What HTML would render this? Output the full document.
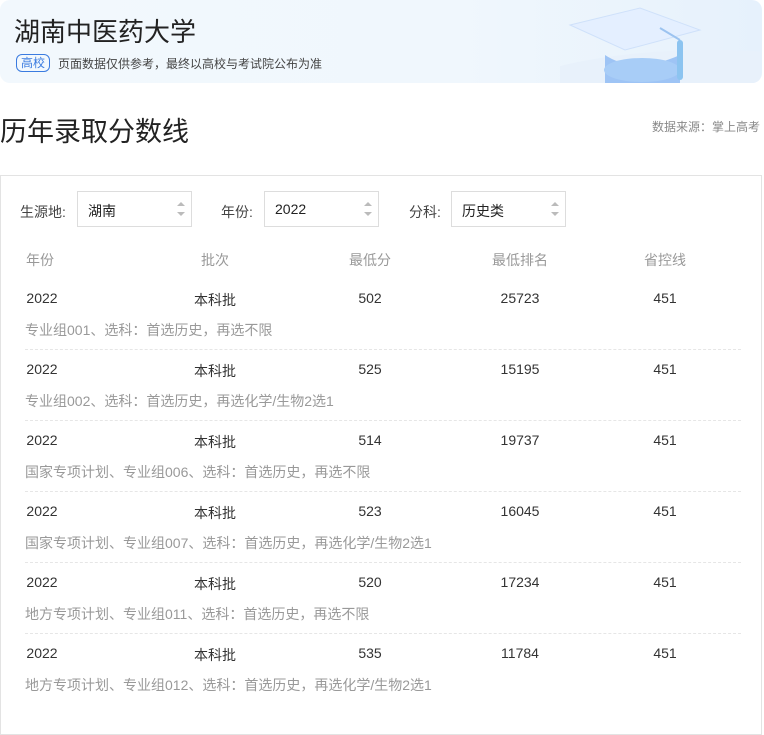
<!DOCTYPE html><html><head><meta charset="utf-8"><style>
*{margin:0;padding:0;box-sizing:border-box}
body{width:764px;height:713px;overflow:hidden;background:#fff;font-family:"Liberation Sans","Noto Sans CJK SC",sans-serif;position:relative;color:#333}
.hd{position:absolute;left:0;top:0;width:762px;height:83px;border-radius:10px;background:linear-gradient(90deg,#f2f8fd,#f0f7fd 60%,#e6f1fc);overflow:hidden}
.hd h1{position:absolute;left:14px;top:12px;font-size:26px;font-weight:normal;color:#222}
.tag{position:absolute;left:16px;top:54px;border:1px solid #3a7be0;color:#3a7be0;border-radius:6px;font-size:12px;padding:0 4px;line-height:16px}
.note{position:absolute;left:58px;top:55px;font-size:12px;color:#444}
.t2{position:absolute;left:0;top:110px;font-size:27px;color:#222}
.src{position:absolute;right:4px;top:118px;font-size:12px;color:#888}
.card{position:absolute;left:0;top:175px;width:762px;height:560px;border:1px solid #e3e3e3}
.lab{position:absolute;font-size:14px;color:#444;top:202px}
.sel{position:absolute;top:191px;height:36px;border:1px solid #ddd;font-size:14px;padding:9px 10px;color:#222}
.sel:after{content:"";position:absolute;right:6px;top:10px;border:4px solid transparent;border-bottom-color:#bbb;border-top:none}
.sel:before{content:"";position:absolute;right:6px;top:20px;border:4px solid transparent;border-top-color:#bbb;border-bottom:none}
.c{position:absolute;font-size:14px;transform:translateX(-50%);white-space:nowrap}
.th{color:#999;top:250px}
.d{position:absolute;left:25px;font-size:14px;color:#999}
.ln{position:absolute;left:25px;width:716px;border-top:1px dashed #e6e6e6}
</style></head><body>
<div class="hd"><h1>湖南中医药大学</h1><span class="tag">高校</span><span class="note">页面数据仅供参考，最终以高校与考试院公布为准</span>
<svg style="position:absolute;left:560px;top:0" width="200" height="83"><ellipse cx="150" cy="110" rx="220" ry="60" fill="#e8f1fb"/><path d="M45 85 L45 55 Q75 75 120 55 L120 85Z" fill="#9ec4f5"/><ellipse cx="82" cy="70" rx="38" ry="12" fill="#a8cdf7"/><polygon points="10,25 80,8 140,30 65,50" fill="#e4efff" stroke="#cfe1fa"/><line x1="100" y1="28" x2="120" y2="40" stroke="#9cc3f0" stroke-width="2"/><rect x="117" y="40" width="6" height="40" rx="3" fill="#8cc4f0"/></svg></div>
<div class="t2">历年录取分数线</div><div class="src">数据来源：掌上高考</div>
<div class="card"></div>
<span class="lab" style="left:20px">生源地:</span><div class="sel" style="left:77px;width:115px">湖南</div>
<span class="lab" style="left:221px">年份:</span><div class="sel" style="left:264px;width:115px">2022</div>
<span class="lab" style="left:409px">分科:</span><div class="sel" style="left:451px;width:115px">历史类</div>
<span class="c th" style="left:40px">年份</span><span class="c th" style="left:215px">批次</span><span class="c th" style="left:370px">最低分</span><span class="c th" style="left:520px">最低排名</span><span class="c th" style="left:665px">省控线</span>
<div id="rows"></div>
<script>
var R=[["502","25723","专业组001、选科：首选历史，再选不限"],["525","15195","专业组002、选科：首选历史，再选化学/生物2选1"],["514","19737","国家专项计划、专业组006、选科：首选历史，再选不限"],["523","16045","国家专项计划、专业组007、选科：首选历史，再选化学/生物2选1"],["520","17234","地方专项计划、专业组011、选科：首选历史，再选不限"],["535","11784","地方专项计划、专业组012、选科：首选历史，再选化学/生物2选1"]];
var h="";R.forEach(function(r,i){var y=290+i*71;
h+='<span class="c" style="left:42px;top:'+y+'px">2022</span><span class="c" style="left:215px;top:'+y+'px">本科批</span><span class="c" style="left:370px;top:'+y+'px">'+r[0]+'</span><span class="c" style="left:520px;top:'+y+'px">'+r[1]+'</span><span class="c" style="left:665px;top:'+y+'px">451</span><span class="d" style="top:'+(y+30)+'px">'+r[2]+'</span>';
if(i<5)h+='<div class="ln" style="top:'+(y+59)+'px"></div>';});
document.getElementById("rows").innerHTML=h;
</script>
</body></html>
